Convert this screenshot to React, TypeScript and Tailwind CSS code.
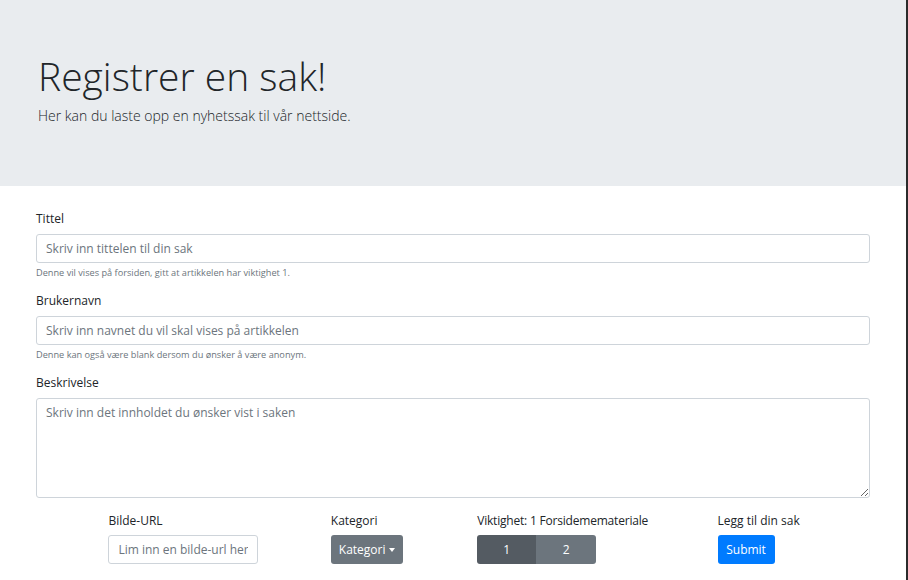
import React from 'react';

const font = { fontFamily: '"Segoe UI", "Open Sans", "Noto Sans", Arial, sans-serif' };

const Field = ({ label, placeholder, help }: { label: string; placeholder: string; help?: string }) => (
    <div className="mb-[12px]">
        <label className="block text-[12px] leading-[18px] mb-[6px] text-[#212529]">{label}</label>
        <input
            placeholder={placeholder}
            className="block w-full h-[29px] px-[9px] text-[12px] border border-[#ced4da] rounded-[3px] bg-white placeholder:text-[#6c757d] outline-none"
        />
        {help && <small className="block mt-[3px] text-[9.2px] leading-[14px] text-[#6c757d]">{help}</small>}
    </div>
);

const App = () => {
    return (
        <div className="flex w-[908px] min-h-[580px] bg-white text-[#212529]" style={font}>
            <div className="w-[906px]">
                {/* Jumbotron */}
                <div className="h-[186px] bg-[#e9ecef] px-[38px] pt-[53px]">
                    <h1 className="text-[39px] leading-[46px] font-light text-[#212529]">Registrer en sak!</h1>
                    <p className="mt-[6px] text-[14px] leading-[22px] font-light text-[#212529]">
                        Her kan du laste opp en nyhetssak til vår nettside.
                    </p>
                </div>

                {/* Form */}
                <form className="px-[36px] pt-[24px]">
                    <Field
                        label="Tittel"
                        placeholder="Skriv inn tittelen til din sak"
                        help="Denne vil vises på forsiden, gitt at artikkelen har viktighet 1."
                    />
                    <Field
                        label="Brukernavn"
                        placeholder="Skriv inn navnet du vil skal vises på artikkelen"
                        help="Denne kan også være blank dersom du ønsker å være anonym."
                    />
                    <div>
                        <label className="block text-[12px] leading-[18px] mb-[6px]">Beskrivelse</label>
                        <textarea
                            placeholder="Skriv inn det innholdet du ønsker vist i saken"
                            className="block w-full h-[100px] px-[9px] py-[5px] text-[12px] leading-[18px] border border-[#ced4da] rounded-[3px] placeholder:text-[#6c757d] outline-none resize-y"
                        />
                    </div>

                    {/* Bottom row */}
                    <div className="flex justify-evenly mt-[14px]">
                        <div className="w-[150px]">
                            <label className="block text-[12px] leading-[18px] mb-[5px] whitespace-nowrap">Bilde-URL</label>
                            <input
                                placeholder="Lim inn en bilde-url her"
                                className="block w-[150px] h-[29px] px-[9px] text-[12px] border border-[#ced4da] rounded-[3px] placeholder:text-[#6c757d] outline-none"
                            />
                        </div>
                        <div className="w-[74px]">
                            <label className="block text-[12px] leading-[18px] mb-[5px] whitespace-nowrap">Kategori</label>
                            <button
                                type="button"
                                className="flex items-center h-[29px] px-[8px] text-[12px] text-white bg-[#6c757d] rounded-[3px]"
                            >
                                Kategori
                                <span className="inline-block w-0 h-0 ml-[4px] border-x-[3.5px] border-x-transparent border-t-[4px] border-t-white" />
                            </button>
                        </div>
                        <div className="w-[168px]">
                            <label className="block text-[12px] leading-[18px] mb-[5px] whitespace-nowrap tracking-[-0.2px]">Viktighet: 1 Forsidememateriale</label>
                            <div className="flex">
                                <button type="button" className="w-[59px] h-[29px] text-[12px] text-white bg-[#545b62] rounded-l-[3px]">1</button>
                                <button type="button" className="w-[60px] h-[29px] text-[12px] text-white bg-[#6c757d] rounded-r-[3px]">2</button>
                            </div>
                        </div>
                        <div className="w-[80px]">
                            <label className="block text-[12px] leading-[18px] mb-[5px] whitespace-nowrap">Legg til din sak</label>
                            <button type="button" className="w-[57px] h-[29px] text-[12px] text-white bg-[#007bff] rounded-[3px]">Submit</button>
                        </div>
                    </div>
                </form>
            </div>
            <div className="w-[2px] bg-[#2b2b2b]" />
        </div>
    );
};

export default App;
